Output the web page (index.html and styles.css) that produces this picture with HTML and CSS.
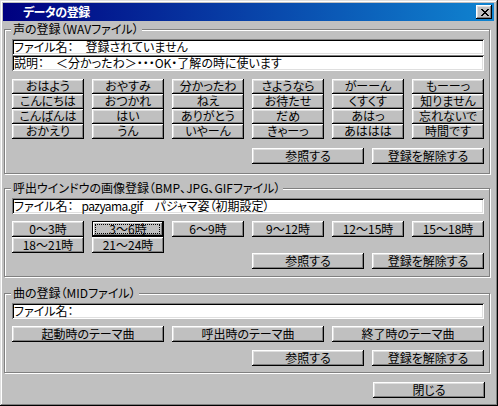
FILE: index.html
```html
<!DOCTYPE html>
<html lang="ja">
<head>
<meta charset="utf-8">
<title>データの登録</title>
<link rel="stylesheet" href="styles.css">
</head>
<body>
<div class="window">
  <div class="titlebar">
    <span class="title">データの登録</span>
    <span class="close">
      <svg width="8" height="7" viewBox="0 0 8 7" shape-rendering="crispEdges">
        <path d="M0 0h2v1h-2z M6 0h2v1h-2z M1 1h2v1h-2z M5 1h2v1h-2z M2 2h4v1h-4z M3 3h2v1h-2z M2 4h4v1h-4z M1 5h2v1h-2z M5 5h2v1h-2z M0 6h2v1h-2z M6 6h2v1h-2z" fill="#000"/>
      </svg>
    </span>
  </div>
  <div class="body">
    <section class="group g1">
      <div class="legend">声の登録（WAVファイル）</div>
      <div class="field">ファイル名：　登録されていません</div>
      <div class="field">説明：　＜分かったわ＞・・・OK・了解の時に使います</div>
      <div class="grid voices">
        <div class="btn">おはよう</div><div class="btn">おやすみ</div><div class="btn">分かったわ</div><div class="btn">さようなら</div><div class="btn">がーーん</div><div class="btn">もーーっ</div>
        <div class="btn">こんにちは</div><div class="btn">おつかれ</div><div class="btn">ねえ</div><div class="btn">お待たせ</div><div class="btn">くすくす</div><div class="btn">知りません</div>
        <div class="btn">こんばんは</div><div class="btn">はい</div><div class="btn">ありがとう</div><div class="btn">だめ</div><div class="btn">あはっ</div><div class="btn">忘れないで</div>
        <div class="btn">おかえり</div><div class="btn">うん</div><div class="btn">いやーん</div><div class="btn">きゃーっ</div><div class="btn">あははは</div><div class="btn">時間です</div>
      </div>
      <div class="actions"><div class="btn wide">参照する</div><div class="btn wide">登録を解除する</div></div>
    </section>

    <section class="group g2">
      <div class="legend">呼出ウインドウの画像登録（BMP、JPG、GIFファイル）</div>
      <div class="field">ファイル名：<span class="gap"></span><span class="latin">pazyama.gif</span>　パジャマ姿（初期設定）</div>
      <div class="grid times">
        <div class="btn">0～3時</div><div class="btn focus">3～6時<span class="ring"></span></div><div class="btn">6～9時</div><div class="btn">9～12時</div><div class="btn">12～15時</div><div class="btn">15～18時</div>
        <div class="btn">18～21時</div><div class="btn">21～24時</div>
      </div>
      <div class="actions flush"><div class="btn wide">参照する</div><div class="btn wide">登録を解除する</div></div>
    </section>

    <section class="group g3">
      <div class="legend">曲の登録（MIDファイル）</div>
      <div class="field">ファイル名：</div>
      <div class="themes">
        <div class="btn">起動時のテーマ曲</div><div class="btn">呼出時のテーマ曲</div><div class="btn">終了時のテーマ曲</div>
      </div>
      <div class="actions"><div class="btn wide">参照する</div><div class="btn wide">登録を解除する</div></div>
    </section>

    <div class="footer"><div class="btn wide">閉じる</div></div>
  </div>
</div>
</body>
</html>
```

FILE: styles.css
```css
* { box-sizing: border-box; }
html, body { margin: 0; padding: 0; background: #c0c0c0; }
body {
  font-family: "Noto Sans CJK JP", "MS UI Gothic", sans-serif;
  font-size: 12px;
  line-height: 12px;
  color: #000;
  font-feature-settings: "palt";
}
.window {
  width: 498px;
  height: 406px;
  background: #c0c0c0;
  padding: 3px 4px 4px 3px;
  box-shadow: inset -1px -1px #000, inset 1px 1px #dfdfdf, inset -2px -2px #808080, inset 2px 2px #fff;
}
.titlebar {
  height: 18px;
  background: linear-gradient(to right, #000080, #1084d0);
  display: flex;
  align-items: center;
  justify-content: space-between;
  padding-left: 20px;
  padding-right: 2px;
}
.title {
  color: #fff;
  font-weight: bold;
  font-size: 12px;
  letter-spacing: -0.5px;
}
.close {
  width: 16px;
  height: 14px;
  background: #c0c0c0;
  box-shadow: inset -1px -1px #000, inset 1px 1px #fff, inset -2px -2px #808080, inset 2px 2px #dfdfdf;
  display: flex;
  align-items: center;
  justify-content: center;
  padding-left: 1px;
}
.close svg { display: block; }
.body {
  padding-left: 1px;
}
.group {
  position: relative;
  width: 486px;
  border: 1px solid #808080;
  box-shadow: inset 1px 1px #fff, 1px 1px #fff;
  padding: 9px 5px 0 7px;
}
.g1 { margin-top: 8px; height: 145px; }
.g2 { margin-top: 14px; height: 89px; }
.g3 { margin-top: 16px; height: 80px; }
.legend {
  position: absolute;
  top: -7px;
  left: 6px;
  padding: 0 3px 0 2px;
  background: #c0c0c0;
  line-height: 12px;
  white-space: nowrap;
}
.field {
  height: 16px;
  background: #fff;
  box-shadow: inset 1px 1px #808080, inset -1px -1px #fff, inset 2px 2px #000, inset -2px -2px #dfdfdf;
  padding: 2px 2px 2px 2px;
  white-space: nowrap;
  overflow: hidden;
  line-height: 12px;
}
.gap { display: inline-block; width: 8px; }
.latin { letter-spacing: -0.6px; }
.btn {
  position: relative;
  background: #c0c0c0;
  box-shadow: inset -1px -1px #000, inset 1px 1px #fff, inset -2px -2px #808080, inset 2px 2px #dfdfdf;
  display: flex;
  align-items: center;
  justify-content: center;
  white-space: nowrap;
  height: 16px;
  padding-bottom: 1px;
}
.grid {
  display: grid;
  grid-template-columns: repeat(6, 72px);
  column-gap: 8px;
}
.voices { margin-top: 8px; }
.voices .btn { height: 15px; }
.times { margin-top: 7px; }
.btn.focus {
  box-shadow: inset 0 0 0 1px #000, inset -2px -2px #000, inset 2px 2px #fff, inset -3px -3px #808080;
}
.ring {
  position: absolute;
  top: 3px; left: 3px; right: 4px; bottom: 3px;
  border: 1px dotted #000;
}
.themes {
  margin-top: 7px;
  display: grid;
  grid-template-columns: repeat(3, 152px);
  column-gap: 8px;
}
.actions {
  display: flex;
  justify-content: flex-end;
  gap: 8px;
  margin-top: 9px;
}
.g3 .actions { margin-top: 8px; }
.actions.flush { margin-top: 0; }
.btn.wide { width: 112px; }
.footer {
  display: flex;
  justify-content: flex-end;
  margin-top: 9px;
  padding-right: 5px;
  width: 486px;
}
```
